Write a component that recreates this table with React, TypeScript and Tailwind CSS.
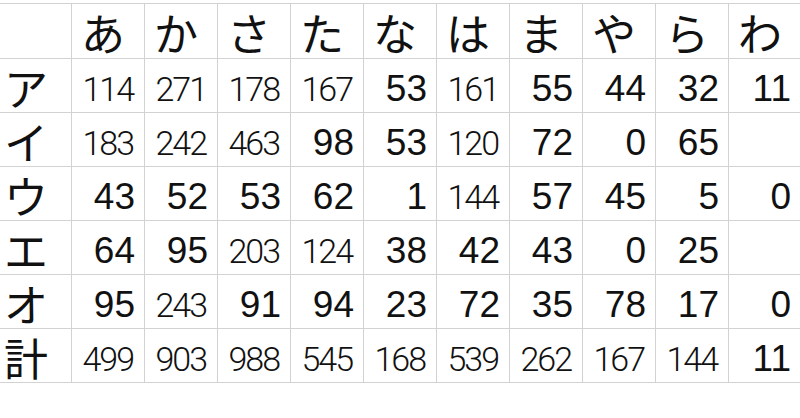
const heads = ["あ", "か", "さ", "た", "な", "は", "ま", "や", "ら", "わ"];

const rows: [string, string[]][] = [
  ["ア", ["114", "271", "178", "167", "53", "161", "55", "44", "32", "11"]],
  ["イ", ["183", "242", "463", "98", "53", "120", "72", "0", "65", ""]],
  ["ウ", ["43", "52", "53", "62", "1", "144", "57", "45", "5", "0"]],
  ["エ", ["64", "95", "203", "124", "38", "42", "43", "0", "25", ""]],
  ["オ", ["95", "243", "91", "94", "23", "72", "35", "78", "17", "0"]],
  ["計", ["499", "903", "988", "545", "168", "539", "262", "167", "144", "11"]],
];

const jp = "font-['Noto_Sans_CJK_JP',sans-serif]";

const Num = ({ v }: { v: string }) => {
  // three-digit values are squeezed into a thinner face (like Excel shrink-to-fit)
  if (v.length === 3) {
    return (
      <span className="font-['Roboto',sans-serif] font-light text-[34px] leading-none pb-[6px] tracking-[-2px] pr-[2px]">
        {v}
      </span>
    );
  }
  return (
    <span className="font-['Liberation_Sans',Arial,sans-serif] text-[37px] leading-none pb-[5px]">
      {v}
    </span>
  );
};

export default function App() {
  return (
    <div className="w-[800px] h-[418px] bg-white overflow-hidden text-[#111]">
      <div className="grid grid-cols-[71px_repeat(9,73px)_72px] mt-[3px] border-t border-[#d2d2d2]">
        <div className="h-[55px] border-b border-[#d2d2d2]" />
        {heads.map((h) => (
          <div
            key={h}
            className={`h-[55px] border-b border-l border-[#d2d2d2] flex items-center pl-[9px] pt-[2px] ${jp} text-[44px] leading-none`}
          >
            {h}
          </div>
        ))}

        {rows.map(([label, vals]) => (
          <div key={label} className="contents">
            <div
              className={`h-[54px] border-b border-[#d2d2d2] flex items-center pl-[4px] pt-[2px] ${jp} text-[44px] leading-none`}
            >
              {label}
            </div>
            {vals.map((v, i) => (
              <div
                key={i}
                className="h-[54px] border-b border-l border-[#d2d2d2] flex items-end justify-end pr-[9px]"
              >
                {v && <Num v={v} />}
              </div>
            ))}
          </div>
        ))}
      </div>
    </div>
  );
}
